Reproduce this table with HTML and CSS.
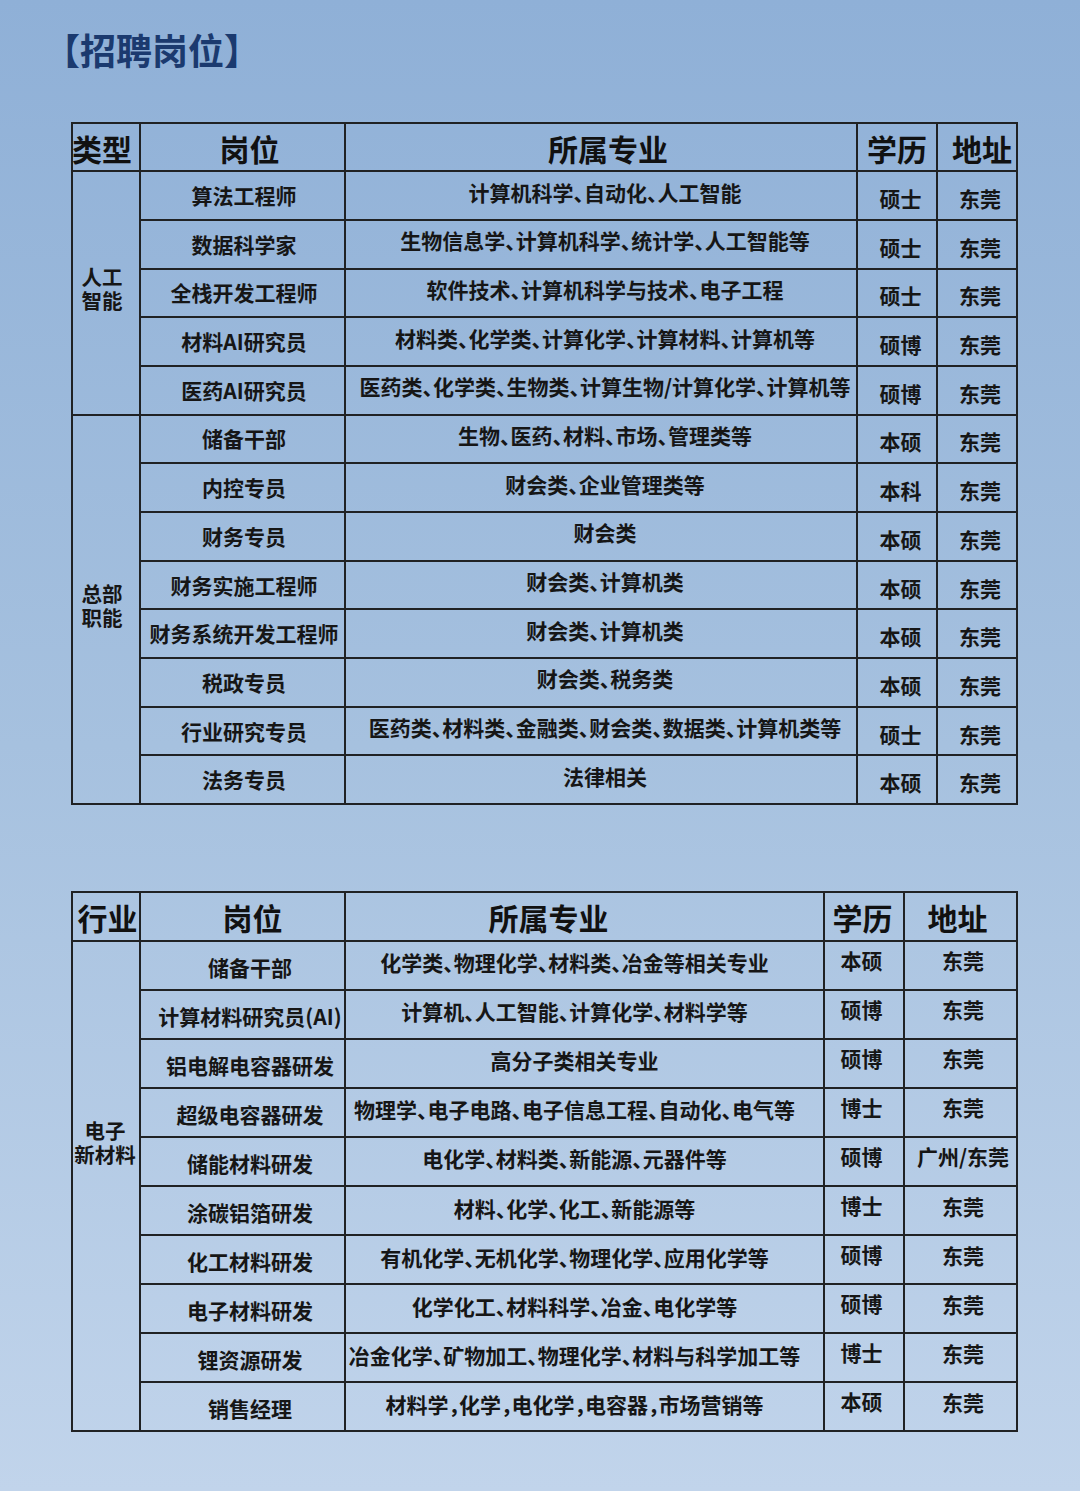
FILE: index.html
```html
<!DOCTYPE html>
<html lang="zh-CN">
<head>
<meta charset="utf-8">
<title>招聘岗位</title>
<link rel="stylesheet" href="styles.css">
</head>
<body>
<div class="page">
  <h1 class="title">【招聘岗位】</h1>

  <div class="tbl t1">
    <div class="cell hd k1">类型</div>
    <div class="cell hd k2">岗位</div>
    <div class="cell hd k3">所属专业</div>
    <div class="cell hd k4">学历</div>
    <div class="cell hd k5">地址</div>

    <div class="cell grp span5"><div class="v"><span class="ln">人工</span><span class="ln">智能</span></div></div>
    <div class="cell pos">算法工程师</div>
    <div class="cell maj">计算机科学、自动化、人工智能</div>
    <div class="cell deg">硕士</div>
    <div class="cell loc">东莞</div>

    <div class="cell pos">数据科学家</div>
    <div class="cell maj">生物信息学、计算机科学、统计学、人工智能等</div>
    <div class="cell deg">硕士</div>
    <div class="cell loc">东莞</div>

    <div class="cell pos">全栈开发工程师</div>
    <div class="cell maj">软件技术、计算机科学与技术、电子工程</div>
    <div class="cell deg">硕士</div>
    <div class="cell loc">东莞</div>

    <div class="cell pos">材料AI研究员</div>
    <div class="cell maj">材料类、化学类、计算化学、计算材料、计算机等</div>
    <div class="cell deg">硕博</div>
    <div class="cell loc">东莞</div>

    <div class="cell pos">医药AI研究员</div>
    <div class="cell maj">医药类、化学类、生物类、计算生物/计算化学、计算机等</div>
    <div class="cell deg">硕博</div>
    <div class="cell loc">东莞</div>

    <div class="cell grp span8"><div class="v"><span class="ln">总部</span><span class="ln">职能</span></div></div>
    <div class="cell pos">储备干部</div>
    <div class="cell maj">生物、医药、材料、市场、管理类等</div>
    <div class="cell deg">本硕</div>
    <div class="cell loc">东莞</div>

    <div class="cell pos">内控专员</div>
    <div class="cell maj">财会类、企业管理类等</div>
    <div class="cell deg">本科</div>
    <div class="cell loc">东莞</div>

    <div class="cell pos">财务专员</div>
    <div class="cell maj">财会类</div>
    <div class="cell deg">本硕</div>
    <div class="cell loc">东莞</div>

    <div class="cell pos">财务实施工程师</div>
    <div class="cell maj">财会类、计算机类</div>
    <div class="cell deg">本硕</div>
    <div class="cell loc">东莞</div>

    <div class="cell pos">财务系统开发工程师</div>
    <div class="cell maj">财会类、计算机类</div>
    <div class="cell deg">本硕</div>
    <div class="cell loc">东莞</div>

    <div class="cell pos">税政专员</div>
    <div class="cell maj">财会类、税务类</div>
    <div class="cell deg">本硕</div>
    <div class="cell loc">东莞</div>

    <div class="cell pos">行业研究专员</div>
    <div class="cell maj">医药类、材料类、金融类、财会类、数据类、计算机类等</div>
    <div class="cell deg">硕士</div>
    <div class="cell loc">东莞</div>

    <div class="cell pos">法务专员</div>
    <div class="cell maj">法律相关</div>
    <div class="cell deg">本硕</div>
    <div class="cell loc">东莞</div>
  </div>

  <div class="tbl t2">
    <div class="cell hd k1">行业</div>
    <div class="cell hd k2">岗位</div>
    <div class="cell hd k3">所属专业</div>
    <div class="cell hd k4">学历</div>
    <div class="cell hd k5">地址</div>

    <div class="cell grp span10"><div class="v"><span class="ln">电子</span><span class="ln">新材料</span></div></div>
    <div class="cell pos">储备干部</div>
    <div class="cell maj">化学类、物理化学、材料类、冶金等相关专业</div>
    <div class="cell deg">本硕</div>
    <div class="cell loc">东莞</div>

    <div class="cell pos">计算材料研究员(AI)</div>
    <div class="cell maj">计算机、人工智能、计算化学、材料学等</div>
    <div class="cell deg">硕博</div>
    <div class="cell loc">东莞</div>

    <div class="cell pos">铝电解电容器研发</div>
    <div class="cell maj">高分子类相关专业</div>
    <div class="cell deg">硕博</div>
    <div class="cell loc">东莞</div>

    <div class="cell pos">超级电容器研发</div>
    <div class="cell maj">物理学、电子电路、电子信息工程、自动化、电气等</div>
    <div class="cell deg">博士</div>
    <div class="cell loc">东莞</div>

    <div class="cell pos">储能材料研发</div>
    <div class="cell maj">电化学、材料类、新能源、元器件等</div>
    <div class="cell deg">硕博</div>
    <div class="cell loc">广州/东莞</div>

    <div class="cell pos">涂碳铝箔研发</div>
    <div class="cell maj">材料、化学、化工、新能源等</div>
    <div class="cell deg">博士</div>
    <div class="cell loc">东莞</div>

    <div class="cell pos">化工材料研发</div>
    <div class="cell maj">有机化学、无机化学、物理化学、应用化学等</div>
    <div class="cell deg">硕博</div>
    <div class="cell loc">东莞</div>

    <div class="cell pos">电子材料研发</div>
    <div class="cell maj">化学化工、材料科学、冶金、电化学等</div>
    <div class="cell deg">硕博</div>
    <div class="cell loc">东莞</div>

    <div class="cell pos">锂资源研发</div>
    <div class="cell maj">冶金化学、矿物加工、物理化学、材料与科学加工等</div>
    <div class="cell deg">博士</div>
    <div class="cell loc">东莞</div>

    <div class="cell pos">销售经理</div>
    <div class="cell maj">材料学，化学，电化学，电容器，市场营销等</div>
    <div class="cell deg">本硕</div>
    <div class="cell loc">东莞</div>
  </div>
</div>
</body>
</html>
```

FILE: styles.css
```css
html {
  background: #a8c2e0;
}
body {
  margin: 0;
  width: 1080px;
  min-height: 1491px;
  background: linear-gradient(180deg, #8fb0d7 0%, #a6c1df 50%, #c1d4eb 100%);
  font-family: "Noto Sans CJK SC", "Noto Sans", sans-serif;
  font-weight: 700;
  color: #161616;
}
.page {
  padding-top: 31px;
}
.title {
  margin: 0;
  padding-left: 44px;
  font-size: 36px;
  line-height: 36px;
  font-weight: 700;
  color: #1b3a6f;
}
.tbl {
  display: grid;
  width: max-content;
  margin-left: 71px;
  border-top: 2px solid #202224;
  border-left: 2px solid #202224;
}
.t1 {
  margin-top: 54.5px;
  grid-template-columns: 68px 205px 512px 80px 80px;
  grid-template-rows: repeat(14, 48.7px);
}
.t2 {
  margin-top: 85.4px;
  grid-template-columns: 68px 205px 479px 80px 113px;
  grid-template-rows: 49px repeat(10, 49.1px);
}
.cell {
  box-sizing: border-box;
  border-right: 2px solid #202224;
  border-bottom: 2px solid #202224;
  display: flex;
  align-items: center;
  justify-content: center;
  font-size: 21px;
  line-height: 1;
  white-space: nowrap;
  text-align: center;
}
.span5 { grid-row: span 5; }
.span8 { grid-row: span 8; }
.span10 { grid-row: span 10; }
.v {
  display: flex;
  flex-direction: column;
  align-items: center;
}
.ln {
  display: block;
  height: 24px;
  line-height: 24px;
  font-size: 20.5px;
}
.maj {
  font-feature-settings: "halt";
}
.hd {
  font-size: 30px;
  color: #111;
}

/* table 1 */
.t1 .hd { padding-top: 2px; }
.t1 .hd.k1 { padding-right: 8px; }
.t1 .hd.k2 { padding-left: 14px; }
.t1 .hd.k3 { padding-left: 14px; }
.t1 .hd.k5 { padding-left: 10px; }
.t1 .grp { padding-right: 8px; padding-bottom: 9px; }
.t1 .pos { padding-left: 3px; }
.t1 .maj { padding-left: 8px; padding-bottom: 7px; }
.t1 .deg { padding-left: 7px; padding-top: 6px; }
.t1 .loc { padding-left: 6px; padding-top: 6px; }

/* table 2 */
.t2 .hd { padding-top: 1px; }
.t2 .hd.k1 { padding-left: 3px; }
.t2 .hd.k2 { padding-left: 20px; }
.t2 .hd.k3 { padding-right: 72px; }
.t2 .hd.k4 { padding-right: 3px; }
.t2 .hd.k5 { padding-right: 6px; }
.t2 .grp { padding-bottom: 88px; padding-right: 2px; }
.t2 .pos { padding-left: 15px; padding-top: 4px; }
.t2 .maj { padding-right: 20px; padding-bottom: 5px; }
.t2 .deg { padding-right: 5px; padding-bottom: 10px; }
.t2 .loc { padding-left: 5px; padding-bottom: 9px; }
```
